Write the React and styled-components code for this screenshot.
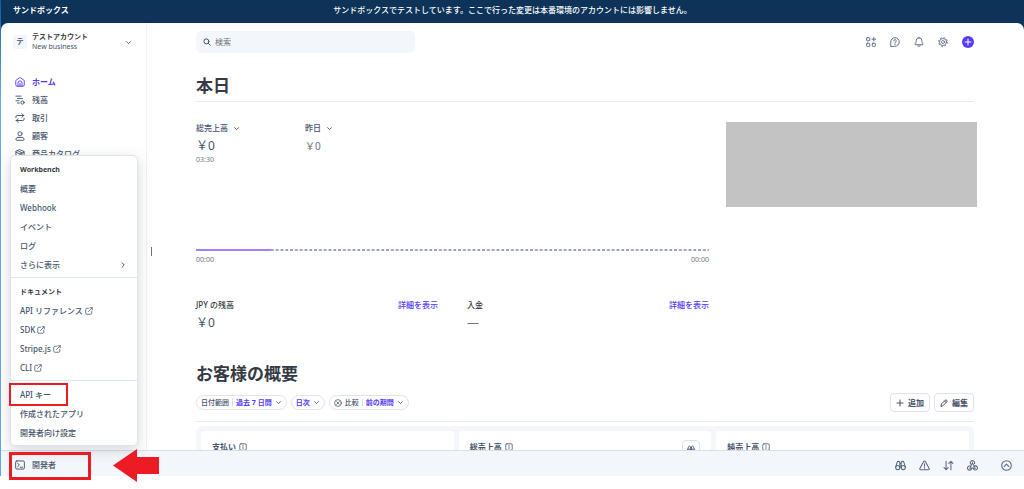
import React from "react";
import styled, { createGlobalStyle } from "styled-components";

const colors = {
  navy: "#0d3359",
  text: "#46546b",
  dark: "#353a44",
  muted: "#6c7688",
  icon: "#596982",
  brand: "#533afd",
  line: "#e6ebf2",
  soft: "#f3f6fa",
  red: "#ed1c24",
};

const GlobalStyle = createGlobalStyle`
  * {
    box-sizing: border-box;
  }
  body {
    margin: 0;
    background: #fff;
    color: ${colors.text};
    font-family: "Noto Sans", "Noto Sans CJK JP", sans-serif;
    font-size: 8px;
    line-height: 12px;
  }
  button,
  input {
    font: inherit;
    color: inherit;
    background: none;
    border: 0;
    padding: 0;
    margin: 0;
  }
  a {
    color: inherit;
    text-decoration: none;
  }
  h1, h2, h3, p, ul {
    margin: 0;
    padding: 0;
    list-style: none;
  }
`;

const paths = {
  home: (
    <>
      <path d="M1.200 6.200Q1.200 5.600 1.800 5.100L6.800 1.400q1.200-.8 2.400 0l5 3.700q.6.500.6 1.100V12.500a2.300 2.300 0 0 1-2.300 2.300h-9a2.300 2.300 0 0 1-2.300-2.300z" />
      <path d="M4.800 14.500V9.400a3.200 3.200 0 0 1 6.400 0v5.100M8 14.500V10" />
    </>
  ),
  balance: (
    <>
      <path d="M1.500 1.800h8M4 5.500h8M1.500 9.200h5M4 12.900h3" />
      <circle cx="12" cy="12" r="2.600" />
    </>
  ),
  transfer: (
    <>
      <path d="M1.500 7.500V6a2 2 0 0 1 2-2H14M11 1l3 3-3 3" />
      <path d="M14.500 8.500V10a2 2 0 0 1-2 2H2M5 9l-3 3 3 3" />
    </>
  ),
  person: (
    <>
      <circle cx="8" cy="4.500" r="3.300" />
      <path d="M4.500 10.300h7q2.200 0 2.800 2.200l.2.900q.2 1.400-1 1.400h-11q-1.200 0-1-1.400l.2-.9q.6-2.200 2.800-2.200z" />
    </>
  ),
  box: (
    <>
      <path d="M8 1.200 14.500 4v8L8 14.800 1.500 12V4z" />
      <path d="M1.500 5 8 8l6.500-3M8 8v6.500M4.500 3l6.500 3v3" />
    </>
  ),
  search: (
    <>
      <circle cx="6.800" cy="6.800" r="5" />
      <path d="m10.500 10.500 4 4" />
    </>
  ),
  chevron: <path d="m3.500 6 4.500 4.500L12.500 6" />,
  right: <path d="M6 3.500 10.500 8 6 12.500" />,
  external: (
    <>
      <path d="M7 2.500H3.500a2 2 0 0 0-2 2v8a2 2 0 0 0 2 2h8a2 2 0 0 0 2-2V9" />
      <path d="M10 1.500h4.500V6M14.500 1.500 7 9" />
    </>
  ),
  terminal: (
    <>
      <rect x="1" y="1.500" width="14" height="13" rx="2" />
      <path d="m4 5 3 3-3 3M8.500 11.500H12" />
    </>
  ),
  apps: (
    <>
      <rect x="1" y="1" width="5" height="5" rx="1" />
      <rect x="1" y="10" width="5" height="5" rx="1" />
      <rect x="10" y="10" width="5" height="5" rx="1" />
      <path d="M12.500 .5v6M9.500 3.500h6" />
    </>
  ),
  help: (
    <>
      <path d="M1.200 14.800V8A6.800 6.800 0 1 1 8 14.800z" />
      <path d="M6 6.300a2 2 0 1 1 2.800 1.800c-.6.300-.8.600-.8 1.200M8 11v1" />
    </>
  ),
  bell: (
    <>
      <path d="M8 1.200a4.500 4.500 0 0 0-4.500 4.500c0 3-.7 4-1.800 5.300-.5.600-.2 1.300.6 1.300h11.400c.8 0 1.100-.7.600-1.300-1.100-1.300-1.800-2.300-1.800-5.300A4.500 4.500 0 0 0 8 1.200z" />
      <path d="M6 14.500q2 1.200 4 0" />
    </>
  ),
  gear: (
    <>
      <circle cx="8" cy="8" r="7" strokeDasharray="2.750 2.750" strokeLinecap="butt" />
      <circle cx="8" cy="8" r="5.600" strokeWidth="1.300" />
      <circle cx="8" cy="8" r="2.400" strokeWidth="1.300" />
    </>
  ),
  plus: <path d="M8 2v12M2 8h12" />,
  pencil: <path d="m2 14 .8-4 7.400-7.400a2.200 2.200 0 0 1 3.200 3.200L6 13.200zM9 4l3 3" />,
  cancel: (
    <>
      <circle cx="8" cy="8" r="6.800" />
      <path d="m5.300 5.300 5.400 5.400M10.700 5.300l-5.400 5.400" />
    </>
  ),
  info: (
    <>
      <rect x="1.500" y="1.500" width="13" height="13" rx="2.500" />
      <path d="M8 7.500v4M8 4.200v1.300" />
    </>
  ),
  binoculars: (
    <>
      <circle cx="4" cy="11" r="3" />
      <circle cx="12" cy="11" r="3" />
      <path d="M1 10.500 3 3.500q.5-1.500 2-1.500t2 1.500V11M15 10.500l-2-7Q12.500 2 11 2T9 3.500V11M7 5h2M7 9h2" />
    </>
  ),
  warning: (
    <>
      <path d="M6.800 2.200a1.400 1.400 0 0 1 2.400 0l5.600 10a1.400 1.400 0 0 1-1.200 2.100H2.400a1.400 1.400 0 0 1-1.200-2.100z" />
      <path d="M8 5.500V9M8 10.800v1.300" />
    </>
  ),
  arrows: <path d="M4.500 2v12M1.500 11l3 3 3-3M11.500 14V2M8.500 5l3-3 3 3" />,
  webhook: (
    <>
      <path d="M5.600 6.200A3.100 3.100 0 1 1 10.800 5.200M8 4.200l3 5.600" />
      <path d="M8 4.200 5 9.800M10.200 9.300a3 3 0 1 1-.6 3.700M12.200 11.800H4" />
      <path d="M5.400 9.200a3 3 0 1 0 1.200 3.600" />
    </>
  ),
  up: (
    <>
      <circle cx="8" cy="8" r="7" />
      <path d="m4.500 9.500 3.500-3.500 3.500 3.500" />
    </>
  ),
};

const Svg = styled.svg`
  flex: none;
  width: ${(p) => p.$size}px;
  height: ${(p) => p.$size}px;
  fill: none;
  stroke: currentColor;
  stroke-width: ${(p) => p.$stroke};
  stroke-linecap: round;
  stroke-linejoin: round;
`;

const Icon = ({ name, size = 10, stroke = 1.5 }) => (
  <Svg viewBox="0 0 16 16" $size={size} $stroke={stroke} aria-hidden="true">
    {paths[name]}
  </Svg>
);

const Page = styled.div`
  display: flex;
  flex-direction: column;
  height: 100vh;
  padding-bottom: 13px;
`;

const Shell = styled.div`
  flex: 1;
  min-height: 0;
  display: flex;
  flex-direction: column;
  background: linear-gradient(#0d5cab, #62a8e5 96px);
  padding-left: 1px;
`;

const Banner = styled.header`
  display: grid;
  grid-template-columns: 1fr auto 1fr;
  align-items: center;
  height: 23px;
  padding: 0 12px 3px;
  background: ${colors.navy};
  color: #fff;
  font-weight: 500;
`;

const BannerTitle = styled.strong`
  font-weight: 700;
`;

const Corners = styled.div`
  flex: 1;
  min-height: 0;
  display: flex;
  background: ${colors.navy};
`;

const Body = styled.div`
  flex: 1;
  min-width: 0;
  display: flex;
  overflow: hidden;
  background: #fff;
  border-radius: 7px 7px 0 0;
`;

const Sidebar = styled.aside`
  flex: none;
  width: 146px;
  padding: 9px 12px;
  border-right: 1px solid #f0f2f6;
`;

const Account = styled.button`
  display: flex;
  align-items: center;
  width: 100%;
  padding-right: 2px;
  text-align: left;
  font-size: 7px;
  line-height: 10px;
`;

const Avatar = styled.span`
  flex: none;
  width: 14px;
  height: 14px;
  margin-right: 5px;
  border-radius: 2px;
  background: ${colors.soft};
  line-height: 14px;
  text-align: center;
  font-weight: 700;
`;

const AccountName = styled.span`
  flex: 1;

  strong {
    display: block;
    color: ${colors.dark};
  }
`;

const Nav = styled.nav`
  margin-top: 21px;
`;

const NavLink = styled.a`
  display: flex;
  align-items: center;
  gap: 7px;
  height: 18px;
  padding-left: 2px;
  color: ${(p) => (p.$active ? colors.brand : "inherit")};
  font-weight: ${(p) => (p.$active ? 700 : 500)};
`;

const Main = styled.main`
  flex: 1;
  min-width: 0;
  display: flex;
  align-items: flex-start;
`;

const Resizer = styled.div`
  flex: none;
  width: 49px;
  padding: 224px 0 0 4px;

  &::before {
    content: "";
    display: block;
    width: 1px;
    height: 9px;
    background: #64748f;
  }
`;

const Content = styled.div`
  flex: 1;
  min-width: 0;
  padding: 8px 50px 0 0;
`;

const TopRow = styled.div`
  display: flex;
  align-items: center;
  justify-content: space-between;
`;

const SearchBox = styled.label`
  display: flex;
  align-items: center;
  gap: 4px;
  width: 219px;
  height: 22px;
  padding: 0 7px;
  border-radius: 5px;
  background: ${colors.soft};

  input {
    flex: 1;
    min-width: 0;
    outline: 0;
  }
  input::placeholder {
    color: ${colors.muted};
    opacity: 1;
  }
`;

const IconRow = styled.div`
  display: flex;
  align-items: center;
  gap: ${(p) => p.$gap}px;
`;

const IconButton = styled.button`
  display: flex;
  align-items: center;
  justify-content: center;
  color: ${colors.icon};
`;

const AddButton = styled(IconButton)`
  width: 12px;
  height: 12px;
  border-radius: 50%;
  background: ${colors.brand};
  color: #fff;
`;

const Title = styled.h1`
  margin-top: 21px;
  padding-bottom: 3px;
  border-bottom: 1px solid ${colors.line};
  color: ${colors.dark};
  font-size: 17px;
  line-height: 24px;
`;

const SectionTitle = styled.h2`
  margin-top: 31px;
  color: ${colors.dark};
  font-size: 17px;
  line-height: 24px;
`;

const Today = styled.section`
  display: grid;
  grid-template-columns: minmax(0, 1fr) 248px;
  gap: 17px;
  margin-top: 20px;
`;

const Placeholder = styled.div`
  height: 85px;
  margin-right: -3px;
  background: #c3c3c3;
`;

const Metrics = styled.div`
  display: flex;
  height: 44px;
`;

const Metric = styled.div`
  width: 109px;
`;

const MetricButton = styled.button`
  display: flex;
  align-items: center;
  gap: 5px;
  font-weight: 500;
`;

const Amount = styled.p`
  margin-top: 4px;
  font-size: ${(p) => (p.$small ? 10 : 12)}px;
  line-height: 16px;
  color: ${(p) => (p.$muted ? colors.muted : colors.text)};
`;

const Small = styled.span`
  display: block;
  color: ${colors.muted};
  font-size: 7px;
  line-height: 12px;
`;

const Chart = styled.svg`
  display: block;
  width: 100%;
  height: 4px;
  margin: 82px 0 2px;
`;

const Axis = styled.div`
  display: flex;
  justify-content: space-between;
`;

const Balances = styled.div`
  display: grid;
  grid-template-columns: 1fr 1fr;
  gap: 29px;
  margin-top: 33px;
`;

const BalanceHead = styled.div`
  display: flex;
  justify-content: space-between;

  h3 {
    font-size: 8px;
    font-weight: 500;
    color: ${colors.dark};
  }
  a {
    color: ${colors.brand};
    font-weight: 500;
  }
`;

const Toolbar = styled.div`
  display: flex;
  align-items: center;
  justify-content: space-between;
  margin-top: 7px;
  padding-bottom: 9px;
  border-bottom: 1px solid ${colors.line};
`;

const Group = styled.div`
  display: flex;
  align-items: center;
  gap: 4px;
`;

const Pill = styled.button`
  display: flex;
  align-items: center;
  gap: 3px;
  height: 15px;
  padding: 0 4px;
  border: 1px solid #dde4ee;
  border-radius: 8px;
  font-size: 7px;
  font-weight: 500;

  b {
    color: ${colors.brand};
    font-weight: 700;
  }
  i {
    width: 1px;
    height: 7px;
    background: #d8dfea;
  }
`;

const Button = styled.button`
  display: flex;
  align-items: center;
  gap: 4px;
  height: 19px;
  padding: 0 5px;
  border: 1px solid #dde4ee;
  border-radius: 4px;
  font-weight: 700;
`;

const Cards = styled.div`
  display: grid;
  grid-template-columns: repeat(3, 1fr);
  gap: 5px;
  margin-top: 4px;
  padding: 5px;
  border-radius: 6px;
  background: ${colors.soft};
`;

const Card = styled.article`
  display: flex;
  align-items: flex-start;
  justify-content: space-between;
  height: 120px;
  padding: 9px 11px;
  border-radius: 4px;
  background: #fff;
`;

const CardTitle = styled.h3`
  display: flex;
  align-items: center;
  gap: 3px;
  font-size: 8px;
  line-height: 14px;
  font-weight: 700;
`;

const CardButton = styled(IconButton)`
  width: 18px;
  height: 18px;
  border: 1px solid #dde4ee;
  border-radius: 4px;
`;

const Footer = styled.footer`
  flex: none;
  position: relative;
  display: flex;
  align-items: center;
  justify-content: space-between;
  height: 26px;
  padding: 3px 12px 0 14px;
  border-top: 1px solid #d9e0ea;
  background: ${colors.soft};
`;

const DevButton = styled.button`
  display: flex;
  align-items: center;
  gap: 7px;
  font-weight: 500;
`;

const Mark = styled.span`
  position: absolute;
  left: 8px;
  top: 1px;
  width: 82px;
  height: 28px;
  border: 3px solid ${colors.red};
  pointer-events: none;
`;

const Arrow = styled.svg`
  position: absolute;
  left: 112px;
  top: -2px;
  width: 46px;
  height: 33px;
  fill: ${colors.red};
`;

const Menu = styled.div`
  position: absolute;
  left: 9px;
  bottom: 30px;
  width: 128px;
  border: 1px solid #dce4ee;
  border-radius: 5px;
  background: #fff;
  box-shadow: 0 4px 14px rgba(48, 49, 61, 0.2);
`;

const MenuSection = styled.ul`
  padding: 4px 0 3px;

  & + & {
    border-top: 1px solid #dde6f0;
  }
`;

const MenuHeading = styled.li`
  padding-left: 9px;
  color: ${colors.dark};
  font-size: 7px;
  font-weight: 700;
  line-height: 19px;
`;

const MenuItem = styled.li`
  position: relative;

  a {
    display: flex;
    align-items: center;
    gap: 2px;
    height: 19px;
    padding: 0 10px 0 9px;
    font-weight: 500;
  }
  a[aria-haspopup] {
    justify-content: space-between;
  }
`;

const KeyMark = styled(Mark)`
  left: -2px;
  top: -2px;
  width: 59px;
  height: 23px;
  border-width: 2px;
`;

const navItems = [
  { icon: "home", label: "ホーム", active: true },
  { icon: "balance", label: "残高" },
  { icon: "transfer", label: "取引" },
  { icon: "person", label: "顧客" },
  { icon: "box", label: "商品カタログ" },
];

const menuSections = [
  {
    heading: "Workbench",
    items: [
      { label: "概要" },
      { label: "Webhook" },
      { label: "イベント" },
      { label: "ログ" },
      { label: "さらに表示", more: true },
    ],
  },
  {
    heading: "ドキュメント",
    items: [
      { label: "API リファレンス", external: true },
      { label: "SDK", external: true },
      { label: "Stripe.js", external: true },
      { label: "CLI", external: true },
    ],
  },
  {
    items: [
      { label: "API キー", marked: true },
      { label: "作成されたアプリ" },
      { label: "開発者向け設定" },
    ],
  },
];

const DevMenu = () => (
  <Menu>
    {menuSections.map((section, index) => (
      <MenuSection key={index}>
        {section.heading && <MenuHeading>{section.heading}</MenuHeading>}
        {section.items.map((item) => (
          <MenuItem key={item.label}>
            <a href="#" aria-haspopup={item.more ? "menu" : undefined}>
              {item.label}
              {item.external && <Icon name="external" size={8} />}
              {item.more && <Icon name="right" size={8} stroke={2} />}
            </a>
            {item.marked && <KeyMark />}
          </MenuItem>
        ))}
      </MenuSection>
    ))}
  </Menu>
);

const App = () => {
  return (
    <Page>
      <GlobalStyle />
      <Shell>
        <Banner>
          <BannerTitle>サンドボックス</BannerTitle>
          <span>
            サンドボックスでテストしています。ここで行った変更は本番環境のアカウントには影響しません。
          </span>
        </Banner>
        <Corners>
          <Body>
            <Sidebar>
              <Account>
                <Avatar>テ</Avatar>
                <AccountName>
                  <strong>テストアカウント</strong>
                  New business
                </AccountName>
                <Icon name="chevron" size={7} stroke={2} />
              </Account>
              <Nav>
                {navItems.map((item) => (
                  <NavLink href="#" key={item.label} $active={item.active}>
                    <Icon name={item.icon} />
                    {item.label}
                  </NavLink>
                ))}
              </Nav>
            </Sidebar>
            <Main>
              <Resizer />
              <Content>
                <TopRow>
                  <SearchBox>
                    <Icon name="search" size={8} stroke={2} />
                    <input type="text" placeholder="検索" aria-label="検索" />
                  </SearchBox>
                  <IconRow $gap={14}>
                    <IconButton aria-label="アプリ">
                      <Icon name="apps" />
                    </IconButton>
                    <IconButton aria-label="ヘルプ">
                      <Icon name="help" />
                    </IconButton>
                    <IconButton aria-label="通知">
                      <Icon name="bell" />
                    </IconButton>
                    <IconButton aria-label="設定">
                      <Icon name="gear" />
                    </IconButton>
                    <AddButton aria-label="作成">
                      <Icon name="plus" size={8} stroke={2} />
                    </AddButton>
                  </IconRow>
                </TopRow>

                <Title>本日</Title>
                <Today>
                  <div>
                    <Metrics>
                      <Metric>
                        <MetricButton>
                          総売上高 <Icon name="chevron" size={7} stroke={2} />
                        </MetricButton>
                        <Amount>￥0</Amount>
                        <Small>03:30</Small>
                      </Metric>
                      <Metric>
                        <MetricButton>
                          昨日 <Icon name="chevron" size={7} stroke={2} />
                        </MetricButton>
                        <Amount $small $muted>
                          ￥0
                        </Amount>
                      </Metric>
                    </Metrics>
                    <Chart>
                      <line
                        x1="14.6%"
                        x2="100%"
                        y1="2"
                        y2="2"
                        stroke="#98a8c4"
                        strokeWidth="2"
                        strokeDasharray="2.900 1.900"
                      />
                      <line x1="0" x2="14.6%" y1="2" y2="2" stroke="#a77dfb" strokeWidth="2" />
                    </Chart>
                    <Axis>
                      <Small>00:00</Small>
                      <Small>00:00</Small>
                    </Axis>
                    <Balances>
                      <div>
                        <BalanceHead>
                          <h3>JPY の残高</h3>
                          <a href="#">詳細を表示</a>
                        </BalanceHead>
                        <Amount>￥0</Amount>
                      </div>
                      <div>
                        <BalanceHead>
                          <h3>入金</h3>
                          <a href="#">詳細を表示</a>
                        </BalanceHead>
                        <Amount $muted>—</Amount>
                      </div>
                    </Balances>
                  </div>
                  <Placeholder />
                </Today>

                <SectionTitle>お客様の概要</SectionTitle>
                <Toolbar>
                  <Group>
                    <Pill>
                      日付範囲 <i /> <b>過去 7 日間</b>
                      <Icon name="chevron" size={7} stroke={2} />
                    </Pill>
                    <Pill>
                      <b>日次</b>
                      <Icon name="chevron" size={7} stroke={2} />
                    </Pill>
                    <Pill>
                      <Icon name="cancel" size={8} />
                      比較 <i /> <b>前の期間</b>
                      <Icon name="chevron" size={7} stroke={2} />
                    </Pill>
                  </Group>
                  <Group>
                    <Button>
                      <Icon name="plus" size={8} stroke={2} /> 追加
                    </Button>
                    <Button>
                      <Icon name="pencil" size={8} stroke={2} /> 編集
                    </Button>
                  </Group>
                </Toolbar>
                <Cards>
                  <Card>
                    <CardTitle>
                      支払い <Icon name="info" size={8} />
                    </CardTitle>
                  </Card>
                  <Card>
                    <CardTitle>
                      総売上高 <Icon name="info" size={8} />
                    </CardTitle>
                    <CardButton aria-label="調べる">
                      <Icon name="binoculars" size={8} stroke={2} />
                    </CardButton>
                  </Card>
                  <Card>
                    <CardTitle>
                      純売上高 <Icon name="info" size={8} />
                    </CardTitle>
                  </Card>
                </Cards>
              </Content>
            </Main>
          </Body>
        </Corners>
        <Footer>
          <DevButton aria-expanded="true">
            <Icon name="terminal" />
            開発者
          </DevButton>
          <DevMenu />
          <Mark />
          <Arrow viewBox="0 0 46 33">
            <path d="M0 16.500 24 0v8h22v17H24v8z" />
          </Arrow>
          <IconRow $gap={23}>
            <IconRow $gap={13}>
              <IconButton aria-label="インスペクター">
                <Icon name="binoculars" size={11} />
              </IconButton>
              <IconButton aria-label="エラー">
                <Icon name="warning" size={11} />
              </IconButton>
              <IconButton aria-label="リクエスト">
                <Icon name="arrows" size={11} />
              </IconButton>
              <IconButton aria-label="Webhook">
                <Icon name="webhook" size={11} />
              </IconButton>
            </IconRow>
            <IconButton aria-label="展開">
              <Icon name="up" size={11} />
            </IconButton>
          </IconRow>
        </Footer>
      </Shell>
    </Page>
  );
};

export default App;
